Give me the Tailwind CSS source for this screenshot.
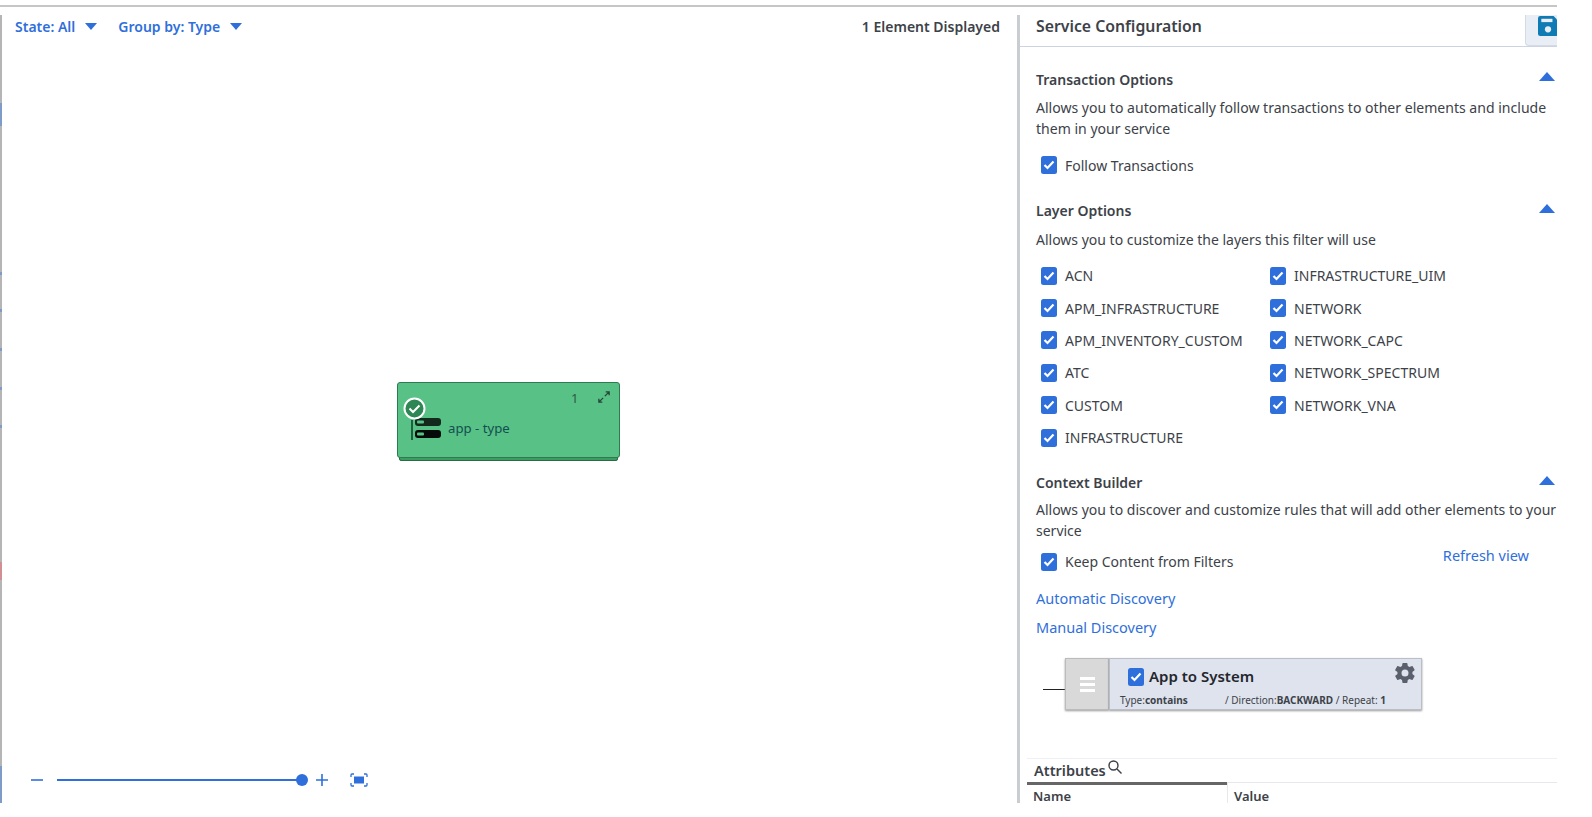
<!DOCTYPE html>
<html lang="en">
<head>
<meta charset="UTF-8">
<title>Service Configuration</title>
<script src="https://cdn.jsdelivr.net/npm/@tailwindcss/browser@4"></script>
</head>
<body class="bg-white overflow-hidden font-['Noto_Sans',sans-serif] text-[14px] text-[#3d4249]">
<svg class="hidden">
  <symbol id="check" viewBox="0 0 16 18"><rect width="16" height="18" rx="2.5" fill="#2f6fdb"/><path d="M3.5 9l3 3 6-6.500" fill="none" stroke="#fff" stroke-width="2.200"/></symbol>
  <symbol id="up" viewBox="0 0 16 9"><path d="M8 0l8 9H0z" fill="#2f6fdb"/></symbol>
  <symbol id="down" viewBox="0 0 12 7"><path d="M0 0h12L6 7z" fill="#2f6fdb"/></symbol>
</svg>

<div class="w-[1557px] h-[803px] overflow-hidden flex flex-col">
  <div class="mt-[5px] h-[10px] border-t-[2px] border-[#c6c6c6] shrink-0"></div>

  <div class="flex flex-1 min-h-0">
    <!-- left rail -->
    <div class="w-[2px] shrink-0 flex flex-col bg-[#b5b5b5]">
      <i class="h-[88px] shrink-0"></i><i class="h-[23px] shrink-0 bg-[#7f9cc9]"></i>
      <i class="h-[146px] shrink-0"></i><i class="h-[3px] shrink-0 bg-[#7f9cc9]"></i>
      <i class="h-[34px] shrink-0"></i><i class="h-[3px] shrink-0 bg-[#7f9cc9]"></i>
      <i class="h-[36px] shrink-0"></i><i class="h-[3px] shrink-0 bg-[#7f9cc9]"></i>
      <i class="h-[36px] shrink-0"></i><i class="h-[3px] shrink-0 bg-[#7f9cc9]"></i>
      <i class="h-[35px] shrink-0"></i><i class="h-[3px] shrink-0 bg-[#7f9cc9]"></i>
      <i class="h-[134px] shrink-0"></i><i class="h-[18px] shrink-0 bg-[#d08f94]"></i>
      <i class="h-[186px] shrink-0"></i><i class="h-[37px] shrink-0 bg-[#7f9cc9]"></i>
    </div>

    <!-- canvas -->
    <div class="relative w-[1015px]">
      <div class="flex items-center h-[23px] pl-[13px] pr-[17px] text-[#2f6fdb] font-semibold">
        <span>State: All</span>
        <svg class="w-[12px] h-[7px] ml-[10px]"><use href="#down"/></svg>
        <span class="ml-[21px]">Group by: Type</span>
        <svg class="w-[12px] h-[7px] ml-[10px]"><use href="#down"/></svg>
        <span class="ml-auto text-[#3d4249] font-semibold">1 Element Displayed</span>
      </div>

      <!-- node -->
      <div class="absolute left-[395px] top-[367px] w-[223px] h-[76px]">
        <div class="absolute left-[2px] right-[2px] top-[3px] h-[76px] rounded-[2px] bg-[#3c9c62] border border-[#2a6b45]"></div>
        <div class="absolute inset-0 rounded-[3px] bg-[#58c185] border border-[#2f7a4e]"></div>
        <span class="absolute left-[174px] top-[7px] text-[13px] text-[#2d5a45]">1</span>
        <svg class="absolute left-[201px] top-[9px] w-[12px] h-[12px]" viewBox="0 0 14 14" fill="none" stroke="#24453a" stroke-width="1.500"><path d="M8 6l5-5M9 1h4v4M6 8l-5 5M1 9v4h4"/></svg>
        <svg class="absolute left-[14px] top-[34px] w-[30px] h-[24px]" viewBox="0 0 30 24">
          <rect x="0" y="4" width="2" height="20" fill="#1f5f3f"/>
          <rect x="4" y="2" width="26" height="8" rx="3" fill="#12291c"/>
          <rect x="4" y="14" width="26" height="8" rx="3" fill="#060a08"/>
          <rect x="6" y="4.500" width="7" height="3" rx="1" fill="#58c185"/>
          <rect x="6" y="16.500" width="7" height="3" rx="1" fill="#58c185"/>
        </svg>
        <span class="absolute left-[51px] top-[37px] text-[13.2px] text-[#124f52]">app - type</span>
        <svg class="absolute left-[6px] top-[15px] w-[23px] h-[23px]" viewBox="0 0 23 23"><circle cx="11.500" cy="11.500" r="10" fill="#2f8655" stroke="#fff" stroke-width="2"/><path d="M6.500 11.500l3.500 3.500 6.500-6.500" fill="none" stroke="#fff" stroke-width="2"/></svg>
      </div>

      <!-- zoom controls -->
      <div class="absolute left-[29px] top-[755px] flex items-center h-[20px]">
        <svg class="w-[12px] h-[12px]" viewBox="0 0 12 12"><path d="M0 6h12" stroke="#2f6fdb" stroke-width="1.600"/></svg>
        <div class="relative ml-[14px] w-[246px] h-[2px] bg-[#2f6fdb]">
          <div class="absolute -right-[5px] -top-[5px] w-[12px] h-[12px] rounded-full bg-[#2f6fdb]"></div>
        </div>
        <svg class="ml-[13px] w-[12px] h-[12px]" viewBox="0 0 12 12"><path d="M0 6h12M6 0v12" stroke="#2f6fdb" stroke-width="1.600"/></svg>
        <svg class="ml-[22px] w-[18px] h-[14px]" viewBox="0 0 18 14" fill="none" stroke="#2f6fdb" stroke-width="1.300"><path d="M1 4V2q0-1 1-1h2M14 1h2q1 0 1 1v2M17 10v2q0 1-1 1h-2M4 13H2q-1 0-1-1v-2"/><rect x="4" y="3.500" width="10" height="7" fill="#2f6fdb" stroke="none"/></svg>
      </div>
    </div>

    <!-- splitter -->
    <div class="w-[3px] bg-[#c9ccd1] shrink-0"></div>

    <!-- service configuration panel -->
    <div class="w-[537px] overflow-hidden flex flex-col">
      <div class="relative flex items-start h-[32px] pl-[16px] border-b border-[#ccd3e2] shrink-0">
        <span class="text-[15.8px] leading-[22px] font-semibold">Service Configuration</span>
        <div class="absolute right-0 top-0 w-[32px] h-[31px] bg-[#e9eef6] border-l border-b border-[#d5dae3] rounded-bl-[4px] pl-[12px] pt-[1px]">
          <svg class="w-[20px] h-[20px]" viewBox="0 0 18 18"><path d="M2 0h12l4 4v12a2 2 0 0 1-2 2H2a2 2 0 0 1-2-2V2a2 2 0 0 1 2-2z" fill="#0f7bb5"/><rect x="3" y="2.500" width="10" height="3" fill="#e9eef6"/><circle cx="9" cy="12" r="2.800" fill="#e9eef6"/></svg>
        </div>
      </div>

      <div class="pl-[16px] flex flex-col">
        <div class="flex justify-between items-start mt-[22px] h-[21px]">
          <span class="font-semibold">Transaction Options</span>
          <svg class="w-[16px] h-[9px] mr-[2px] mt-[3px]"><use href="#up"/></svg>
        </div>
        <p class="mt-[7px] leading-[21px] w-[520px] text-[14.05px]">Allows you to automatically follow transactions to other elements and include them in your service</p>
        <label class="flex items-center mt-[16px] ml-[5px] h-[20px]"><svg class="w-[16px] h-[18px] mr-[8px]"><use href="#check"/></svg>Follow Transactions</label>

        <div class="flex justify-between items-start mt-[25px] h-[21px]">
          <span class="font-semibold">Layer Options</span>
          <svg class="w-[16px] h-[9px] mr-[2px] mt-[4px]"><use href="#up"/></svg>
        </div>
        <p class="mt-[8px] leading-[21px]">Allows you to customize the layers this filter will use</p>

        <div class="grid grid-cols-[229px_1fr] grid-rows-[repeat(6,32.4px)] grid-flow-col ml-[5px] mt-[9.5px]">
          <label class="flex items-center"><svg class="w-[16px] h-[18px] mr-[8px]"><use href="#check"/></svg>ACN</label>
          <label class="flex items-center"><svg class="w-[16px] h-[18px] mr-[8px]"><use href="#check"/></svg>APM_INFRASTRUCTURE</label>
          <label class="flex items-center"><svg class="w-[16px] h-[18px] mr-[8px]"><use href="#check"/></svg>APM_INVENTORY_CUSTOM</label>
          <label class="flex items-center"><svg class="w-[16px] h-[18px] mr-[8px]"><use href="#check"/></svg>ATC</label>
          <label class="flex items-center"><svg class="w-[16px] h-[18px] mr-[8px]"><use href="#check"/></svg>CUSTOM</label>
          <label class="flex items-center"><svg class="w-[16px] h-[18px] mr-[8px]"><use href="#check"/></svg>INFRASTRUCTURE</label>
          <label class="flex items-center"><svg class="w-[16px] h-[18px] mr-[8px]"><use href="#check"/></svg>INFRASTRUCTURE_UIM</label>
          <label class="flex items-center"><svg class="w-[16px] h-[18px] mr-[8px]"><use href="#check"/></svg>NETWORK</label>
          <label class="flex items-center"><svg class="w-[16px] h-[18px] mr-[8px]"><use href="#check"/></svg>NETWORK_CAPC</label>
          <label class="flex items-center"><svg class="w-[16px] h-[18px] mr-[8px]"><use href="#check"/></svg>NETWORK_SPECTRUM</label>
          <label class="flex items-center"><svg class="w-[16px] h-[18px] mr-[8px]"><use href="#check"/></svg>NETWORK_VNA</label>
        </div>

        <div class="flex justify-between items-start mt-[18.5px] h-[21px]">
          <span class="font-semibold">Context Builder</span>
          <svg class="w-[16px] h-[9px] mr-[2px] mt-[4px]"><use href="#up"/></svg>
        </div>
        <p class="mt-[6px] leading-[21px] whitespace-nowrap">Allows you to discover and customize rules that will add other elements to your<br>service</p>
        <div class="flex items-start mt-[10.5px] ml-[5px]">
          <label class="flex items-center h-[20px]"><svg class="w-[16px] h-[18px] mr-[8px]"><use href="#check"/></svg>Keep Content from Filters</label>
          <a class="ml-auto mr-[28px] -mt-[7px] text-[14.5px] text-[#2f6fdb]">Refresh view</a>
        </div>
        <a class="mt-[16.5px] leading-[21px] text-[14.5px] text-[#2f6fdb]">Automatic Discovery</a>
        <a class="mt-[8px] leading-[21px] text-[14.5px] text-[#2f6fdb]">Manual Discovery</a>

        <!-- rule card -->
        <div class="flex items-center mt-[20px] ml-[7px]">
          <div class="w-[22px] h-px mt-[10px] bg-[#222]"></div>
          <div class="flex items-center justify-center w-[44px] h-[52px] bg-[#d9d9d9] border border-[#bbb] shadow-[0_1px_2px_#999]">
            <div class="flex flex-col gap-[3px] w-[15px]"><i class="h-[3px] bg-white"></i><i class="h-[3px] bg-white"></i><i class="h-[3px] bg-white"></i></div>
          </div>
          <div class="relative w-[313px] h-[52px] bg-[#dee3ed] border border-[#b9bec7] shadow-[0_1px_2px_#999]">
            <div class="flex items-center mt-[6px] ml-[18px]"><svg class="w-[16px] h-[18px] mr-[5px]"><use href="#check"/></svg><span class="text-[15px] font-semibold text-[#23272d]">App to System</span></div>
            <div class="flex mt-[5px] ml-[10px] text-[10px] leading-[14px] whitespace-nowrap">
              <span class="w-[105px]">Type:<b class="font-bold">contains</b></span>
              <span>/ Direction:<b class="font-bold">BACKWARD</b> / Repeat: <b class="font-bold">1</b></span>
            </div>
            <svg class="absolute right-[4px] top-[2px] w-[24px] h-[24px]" viewBox="0 0 24 24" fill="#5a616c"><path d="M19.400 13c.04-.33.06-.66.06-1s-.02-.67-.06-1l2.100-1.650a.5.500 0 0 0 .12-.64l-2-3.460a.5.500 0 0 0-.61-.22l-2.490 1a7.300 7.300 0 0 0-1.730-1l-.38-2.650A.5.500 0 0 0 13.900 2h-4a.5.500 0 0 0-.49.42l-.38 2.650c-.63.25-1.200.6-1.730 1l-2.490-1a.5.500 0 0 0-.61.22l-2 3.460a.5.500 0 0 0 .12.64L4.500 11c-.04.33-.07.67-.07 1s.03.67.07 1l-2.180 1.650a.5.500 0 0 0-.12.64l2 3.460c.12.22.38.3.61.22l2.490-1c.52.4 1.100.74 1.730 1l.38 2.650c.04.24.25.42.49.42h4c.25 0 .45-.18.49-.42l.38-2.650c.63-.26 1.200-.6 1.730-1l2.490 1c.23.08.49 0 .61-.22l2-3.460a.5.500 0 0 0-.12-.64zM12 15.500a3.500 3.500 0 1 1 0-7 3.500 3.500 0 0 1 0 7z"/></svg>
          </div>
        </div>

        <!-- attributes table -->
        <div class="mt-[48px] ml-[-9px] border-t border-[#eef0f3]">
          <div class="flex items-start h-[23px] pl-[7px] text-[14.5px] font-semibold leading-[22px]">
            <span>Attributes</span>
            <svg class="w-[14px] h-[14px] mt-[1px] ml-[2px]" viewBox="0 0 14 14" fill="none" stroke="#3d4249" stroke-width="1.400"><circle cx="5.500" cy="5.500" r="4.500"/><path d="M9 9l4.500 4.500"/></svg>
          </div>
          <div class="flex border-t border-[#e6e8ec]">
            <div class="w-[200px] border-t-[3px] -mt-px border-[#666] pl-[6px] pt-[2px] font-semibold text-[13px]">Name</div>
            <div class="pl-[6px] border-l border-[#e6e8ec] pt-[4px] font-semibold text-[13px]">Value</div>
          </div>
        </div>
      </div>
    </div>
  </div>
</div>
</body>
</html>
